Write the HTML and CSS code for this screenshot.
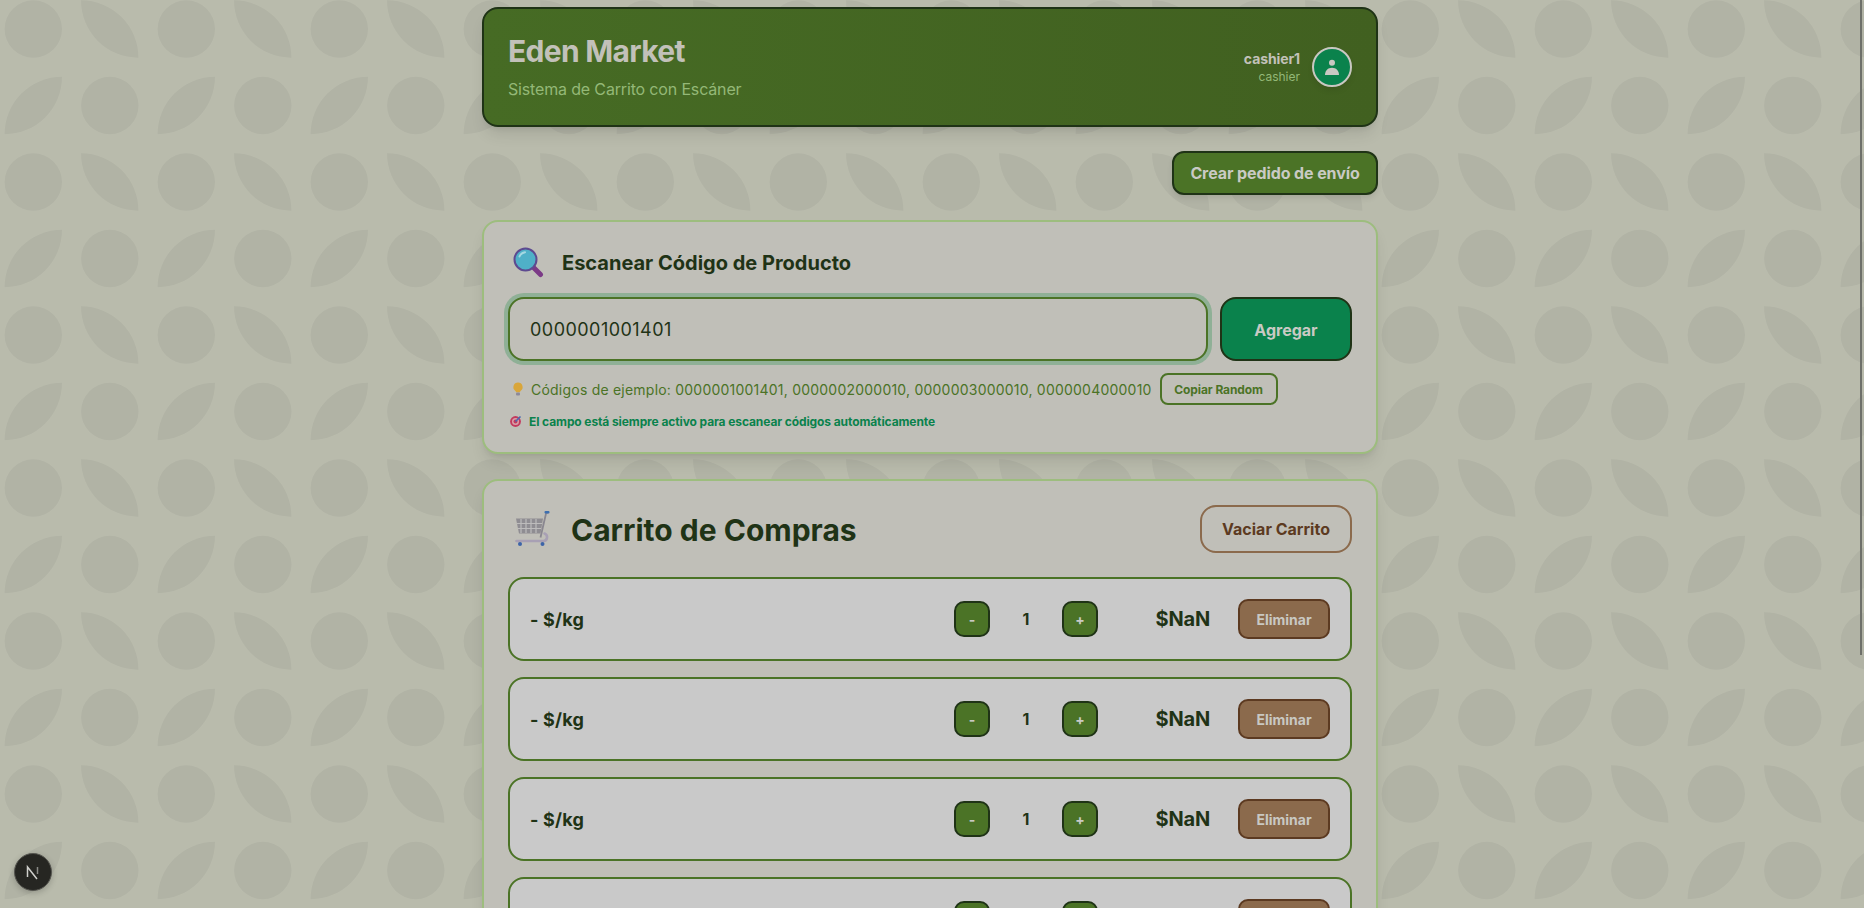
FILE: index.html
```html
<!DOCTYPE html>
<html lang="es">
<head>
<meta charset="utf-8">
<title>Eden Market</title>
<link rel="stylesheet" href="styles.css">
</head>
<body>
<main class="page">
  <header class="hero">
    <div>
      <h1 class="hero-title">Eden Market</h1>
      <p class="hero-sub">Sistema de Carrito con Escáner</p>
    </div>
    <div class="user">
      <div class="user-text">
        <div class="user-name">cashier1</div>
        <div class="user-role">cashier</div>
      </div>
      <div class="avatar">
        <svg width="20" height="20" viewBox="0 0 20 20"><circle cx="10" cy="5.700" r="3" fill="#c9c8c2"/><path d="M3 18C3 13.500 6 10.700 10 10.700s7 2.800 7 7.300z" fill="#c9c8c2"/></svg>
      </div>
    </div>
  </header>

  <div class="actions">
    <button class="btn-ship">Crear pedido de envío</button>
  </div>

  <section class="card scan">
    <div class="scan-head">
      <svg class="scan-icon" width="32" height="32" viewBox="0 0 32 32"><path d="M20 20l8.500 8.500" stroke="#7b3a86" stroke-width="5" stroke-linecap="round"/><circle cx="13.500" cy="13.500" r="11" fill="#4fb0c8" stroke="#5d4a90" stroke-width="2"/><path d="M7.500 10.500c1-2.500 3-4 5.500-4.300" stroke="#a5d8e2" stroke-width="2" fill="none" stroke-linecap="round"/></svg>
      <h2 class="scan-title">Escanear Código de Producto</h2>
    </div>
    <div class="scan-row">
      <input class="scan-input" type="text" value="0000001001401" aria-label="Código">
      <button class="btn-add">Agregar</button>
    </div>
    <div class="hint">
      <svg class="hint-icon" width="12" height="14" viewBox="0 0 12 14"><path d="M6 .5a4.600 4.600 0 0 0-2.600 8.400c.5.400.7.900.7 1.400h3.800c0-.5.2-1 .7-1.400A4.600 4.600 0 0 0 6 .5z" fill="#d9a63a"/><rect x="4" y="10.600" width="4" height="2.800" rx="1" fill="#8d8a9a"/></svg>
      <span class="hint-text">Códigos de ejemplo: 0000001001401, 0000002000010, 0000003000010, 0000004000010</span>
      <button class="btn-copy">Copiar Random</button>
    </div>
    <div class="note">
      <svg class="note-icon" width="12" height="12" viewBox="0 0 12 12"><circle cx="5.500" cy="6.500" r="5.400" fill="#c23a5e"/><circle cx="5.500" cy="6.500" r="3.500" fill="#d8a0a8"/><circle cx="5.500" cy="6.500" r="2" fill="#c23a5e"/><path d="M5.500 6.500L10.500 1.500" stroke="#4a6ab0" stroke-width="1.600"/></svg>
      <span>El campo está siempre activo para escanear códigos automáticamente</span>
    </div>
  </section>

  <section class="card cart">
    <div class="cart-head">
      <div class="cart-title-wrap">
        <svg class="cart-icon" width="36" height="36" viewBox="0 0 36 36"><path d="M1 7.500h27l-2.500 15H4z" fill="#8f8d92"/><path d="M6 8v14M11 8v14M16 8v14M21 8v14M2 12.500h25M3 17.500h23" stroke="#bdbcbc" stroke-width="1.200"/><path d="M33 1.500l-2 1-5.500 24" stroke="#8a8790" stroke-width="1.800" fill="none"/><rect x="29.500" y="0" width="5" height="2.500" rx="1" fill="#3d6fb0"/><path d="M1.500 30h27c4 0 5-6 1-7.500" stroke="#a8a0b4" stroke-width="2.600" fill="none" stroke-linecap="round"/><circle cx="5" cy="33" r="2" fill="#3d64a8"/><circle cx="27.500" cy="33" r="2" fill="#3d64a8"/></svg>
        <h2 class="cart-title">Carrito de Compras</h2>
      </div>
      <button class="btn-clear">Vaciar Carrito</button>
    </div>
    <div class="cart-list">
      <article class="item"><div class="item-name">- $/kg</div><div class="qty"><button class="btn-qty">-</button><span class="qty-num">1</span><button class="btn-qty">+</button></div><div class="item-price">$NaN</div><button class="btn-del">Eliminar</button></article>
      <article class="item"><div class="item-name">- $/kg</div><div class="qty"><button class="btn-qty">-</button><span class="qty-num">1</span><button class="btn-qty">+</button></div><div class="item-price">$NaN</div><button class="btn-del">Eliminar</button></article>
      <article class="item"><div class="item-name">- $/kg</div><div class="qty"><button class="btn-qty">-</button><span class="qty-num">1</span><button class="btn-qty">+</button></div><div class="item-price">$NaN</div><button class="btn-del">Eliminar</button></article>
      <article class="item"><div class="item-name">- $/kg</div><div class="qty"><button class="btn-qty">-</button><span class="qty-num">1</span><button class="btn-qty">+</button></div><div class="item-price">$NaN</div><button class="btn-del">Eliminar</button></article>
      <article class="item"><div class="item-name">- $/kg</div><div class="qty"><button class="btn-qty">-</button><span class="qty-num">1</span><button class="btn-qty">+</button></div><div class="item-price">$NaN</div><button class="btn-del">Eliminar</button></article>
      <article class="item"><div class="item-name">- $/kg</div><div class="qty"><button class="btn-qty">-</button><span class="qty-num">1</span><button class="btn-qty">+</button></div><div class="item-price">$NaN</div><button class="btn-del">Eliminar</button></article>
    </div>
  </section>
</main>

<div class="scroll-thumb"></div>

<button class="dev-badge" aria-label="Next.js">
  <svg width="20" height="20" viewBox="0 0 20 20"><path d="M4.500 15V5l9.500 12" stroke="#d0d0cc" stroke-width="1.500" fill="none"/><path d="M14.500 5v7" stroke="#8a8a86" stroke-width="1.500" fill="none"/></svg>
</button>
</body>
</html>
```

FILE: styles.css
```css
* { box-sizing: border-box; }

html {
  background-color: #b9bbac;
  background-image: url("data:image/svg+xml,%3Csvg xmlns='http://www.w3.org/2000/svg' width='153' height='153' viewBox='0 0 153 153'%3E%3Cg fill='%23b1b3a5'%3E%3Ccircle cx='33.3' cy='29' r='28.7'/%3E%3Ccircle cx='109.8' cy='105.5' r='28.7'/%3E%3Cpath d='M81 .3A57.4 57.4 0 0 0 138.400 57.700 57.4 57.4 0 0 0 81 .3z'/%3E%3Cpath d='M4.600 134.200A57.4 57.4 0 0 0 62 76.800 57.4 57.4 0 0 0 4.600 134.200z'/%3E%3C/g%3E%3C/svg%3E");
  background-size: 153px 153px;
  scrollbar-width: none;
}

body {
  margin: 0;
  padding-right: 4px;
  font-family: Inter, "Liberation Sans", sans-serif;
  color: #1f3316;
}

button { font-family: inherit; cursor: pointer; }

.page {
  width: 896px;
  margin: 0 auto;
  padding: 7px 0 72px;
  display: flex;
  flex-direction: column;
}

.hero {
  height: 120px;
  padding: 0 24px;
  display: flex;
  align-items: center;
  justify-content: space-between;
  border: 2px solid #1f3316;
  border-radius: 16px;
  background: linear-gradient(90deg, #466b24 0%, #416020 100%);
  box-shadow: 0 10px 15px -3px rgba(0,0,0,.1), 0 4px 6px -4px rgba(0,0,0,.1);
}

.hero-title {
  margin: 0 0 8px;
  font-size: 30px;
  line-height: 36px;
  font-weight: 700;
  letter-spacing: -0.7px;
  color: #c2c1b9;
}

.hero-sub {
  margin: 0;
  font-size: 16px;
  line-height: 24px;
  letter-spacing: -0.16px;
  color: #94b877;
}

.user { display: flex; align-items: center; gap: 12px; }
.user-text { text-align: right; }
.user-name { font-size: 14px; line-height: 20px; font-weight: 700; letter-spacing: -0.1px; color: #c2c1b9; }
.user-role { font-size: 12px; line-height: 16px; color: #94b877; }

.avatar {
  width: 40px;
  height: 40px;
  border: 2px solid #c9c8c2;
  border-radius: 50%;
  background: #0a824c;
  display: flex;
  align-items: center;
  justify-content: center;
  box-shadow: 0 4px 6px -1px rgba(0,0,0,.1);
}

.actions { margin-top: 24px; display: flex; justify-content: flex-end; }

.btn-ship {
  height: 44px;
  width: 206px;
  padding: 0;
  border: 2px solid #1f3316;
  border-radius: 12px;
  background: #4b7326;
  color: #c9cac4;
  font-size: 16px;
  font-weight: 700;
  letter-spacing: -0.1px;
  box-shadow: 0 4px 6px -1px rgba(0,0,0,.1);
}

.card {
  margin-top: 25px;
  border: 2px solid #9dbd7e;
  border-radius: 16px;
  background: #c0bfb8;
  padding: 24px;
  box-shadow: 0 10px 15px -3px rgba(0,0,0,.1), 0 4px 6px -4px rgba(0,0,0,.1);
}

.scan { height: 234px; }

.scan-head { display: flex; align-items: center; gap: 18px; height: 32px; margin-bottom: 19px; margin-left: 4px; }
.scan-icon { flex: none; }
.scan-title { margin: 2px 0 0; font-size: 20px; line-height: 28px; font-weight: 700; color: #1f3316; }

.scan-row { display: flex; gap: 12px; }

.scan-input {
  width: 700px;
  height: 64px;
  padding: 1px 20px 0;
  border: 2px solid #4b7326;
  border-radius: 16px;
  outline: none;
  background: #c0bfb8;
  box-shadow: 0 0 0 4px #8fb096;
  color: #1f3316;
  font-family: inherit;
  font-size: 18px;
  letter-spacing: 0.46px;
}

.btn-add {
  width: 132px;
  height: 64px;
  padding: 1px 0 0;
  border: 2px solid #1f3316;
  border-radius: 16px;
  background: #0a824c;
  color: #c9cac4;
  font-size: 16px;
  font-weight: 700;
}

.hint { margin-top: 12px; display: flex; align-items: center; height: 32px; padding-left: 4px; }
.hint-icon { flex: none; margin-right: 7px; }
.hint-text { font-size: 14px; letter-spacing: 0.22px; color: #4b7326; white-space: nowrap; }

.btn-copy {
  margin-left: 8px;
  width: 118px;
  height: 32px;
  padding: 0;
  border: 2px solid #4b7326;
  border-radius: 8px;
  background: transparent;
  color: #4b7326;
  font-size: 12px;
  font-weight: 700;
  letter-spacing: -0.1px;
}

.note { margin-top: 8px; display: flex; align-items: center; height: 16px; padding-left: 2px; gap: 7px; font-size: 12px; font-weight: 700; letter-spacing: -0.1px; color: #0a824c; }
.note-icon { flex: none; }

.cart-head { display: flex; align-items: center; justify-content: space-between; height: 48px; margin-bottom: 24px; }
.cart-title-wrap { display: flex; align-items: center; gap: 20px; padding-left: 7px; }
.cart-icon { flex: none; }
.cart-title { margin: 2px 0 0; font-size: 30px; line-height: 36px; font-weight: 700; color: #1f3316; }

.btn-clear {
  width: 152px;
  height: 48px;
  padding: 0;
  border: 2px solid #8b6a4c;
  border-radius: 16px;
  background: transparent;
  color: #5c3a21;
  font-size: 16px;
  font-weight: 700;
}

.cart-list { display: flex; flex-direction: column; gap: 16px; }

.item {
  height: 84px;
  padding: 0 20px;
  display: flex;
  align-items: center;
  border: 2px solid #4b7326;
  border-radius: 16px;
  background: #c9c9c9;
}

.item-name { flex: 1; font-size: 18px; font-weight: 700; letter-spacing: 0.2px; color: #1f3316; }

.qty { display: flex; align-items: center; }

.btn-qty {
  width: 36px;
  height: 36px;
  padding: 0;
  border: 2px solid #1f3316;
  border-radius: 10px;
  background: #4b7326;
  color: #c9cac4;
  font-size: 14px;
  font-weight: 700;
}

.qty-num { width: 36px; margin: 0 18px; text-align: center; font-size: 16px; font-weight: 700; color: #1f3316; }

.item-price { width: 112px; text-align: right; font-size: 20px; font-weight: 700; letter-spacing: -0.2px; color: #1f3316; }

.btn-del {
  margin-left: 28px;
  width: 92px;
  height: 40px;
  padding: 0;
  border: 2px solid #5c3a21;
  border-radius: 10px;
  background: #8b6a4c;
  color: #c9c8c2;
  font-size: 14px;
  font-weight: 700;
}

.scroll-thumb {
  position: fixed;
  top: 0;
  right: 2px;
  width: 2px;
  height: 655px;
  background: #6e706a;
}

.dev-badge {
  position: fixed;
  left: 14px;
  bottom: 17px;
  width: 38px;
  height: 38px;
  padding: 0;
  display: flex;
  align-items: center;
  justify-content: center;
  border: 1px solid #55554f;
  border-radius: 50%;
  background: #262622;
  box-shadow: 0 2px 6px rgba(0,0,0,.2);
}
```
